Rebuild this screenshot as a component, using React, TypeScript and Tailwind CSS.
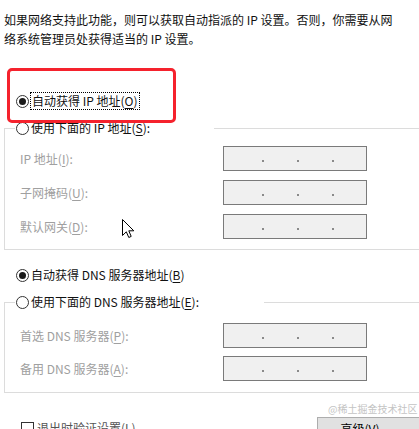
import React from "react";

function Radio({ checked }: { checked?: boolean }) {
  return (
    <span className="w-[13px] h-[13px] rounded-full border border-[#333333] bg-white flex items-center justify-center shrink-0">
      {checked && <span className="w-[7px] h-[7px] rounded-full bg-[#1a1a1a]" />}
    </span>
  );
}

function IpBox() {
  return (
    <div className="w-[144px] h-[25px] border border-[#7a7a7a] bg-[#f0f0f0] flex items-center pl-[38px] pt-[5px] gap-[33px]">
      <span className="w-[2px] h-[2px] bg-[#8a8a8a]" />
      <span className="w-[2px] h-[2px] bg-[#8a8a8a]" />
      <span className="w-[2px] h-[2px] bg-[#8a8a8a]" />
    </div>
  );
}

function Row({ label, k, rest }: { label: string; k: string; rest?: string }) {
  return (
    <div className="grid grid-cols-[218px_144px] items-center h-[25px]">
      <span className="pl-[15px] text-[#a0a0a0]">
        {label}(<u className="underline-offset-2">{k}</u>){rest ?? ":"}
      </span>
      <IpBox />
    </div>
  );
}

function Cursor() {
  return (
    <svg width="13" height="20" viewBox="0 0 13 20" className="absolute left-[122px] top-[219px]">
      <path
        d="M0.5 0.5 L0.5 16.5 L4.3 12.8 L6.8 18.5 L9.2 17.4 L6.8 11.8 L11.8 11.8 Z"
        fill="white"
        stroke="black"
        strokeWidth="1"
        strokeLinejoin="miter"
      />
    </svg>
  );
}

export default function App() {
  return (
    <div className="relative w-[419px] h-[429px] overflow-hidden bg-white text-[12px] text-[#111] font-['Noto_Sans_CJK_SC',sans-serif]">
      <p className="pt-[10px] px-[4px] leading-[19px]">
        如果网络支持此功能，则可以获取自动指派的 IP 设置。否则，你需要从网
        <br />
        络系统管理员处获得适当的 IP 设置。
      </p>

      <div className="mt-[44px] h-[18px] flex items-center pl-[16px] gap-[1px]">
        <Radio checked />
        <span className="border border-dotted border-black h-[18px] flex items-center px-[1px] leading-none">
          自动获得 IP 地址(<u className="underline-offset-2">O</u>)
        </span>
      </div>

      <div className="mt-[18px] ml-[4px] w-[420px] border border-[#dcdcdc] pb-[10px]">
        <div className="-mt-[10px] ml-[10px] w-[199px] h-[18px] bg-white flex items-center gap-[2px] pl-[1px]">
          <Radio />
          <span>
            使用下面的 IP 地址(<u className="underline-offset-2">S</u>):
          </span>
        </div>
        <div className="mt-[9px] flex flex-col gap-[9px]">
          <Row label="IP 地址" k="I" />
          <Row label="子网掩码" k="U" />
          <Row label="默认网关" k="D" />
        </div>
      </div>

      <div className="mt-[16px] h-[18px] flex items-center pl-[16px] gap-[2px]">
        <Radio checked />
        <span>
          自动获得 DNS 服务器地址(<u className="underline-offset-2">B</u>)
        </span>
      </div>

      <div className="mt-[18px] ml-[4px] w-[420px] border border-[#dcdcdc] pb-[11px]">
        <div className="-mt-[10px] ml-[10px] w-[249px] h-[18px] bg-white flex items-center gap-[2px] pl-[1px]">
          <Radio />
          <span>
            使用下面的 DNS 服务器地址(<u className="underline-offset-2">E</u>):
          </span>
        </div>
        <div className="mt-[12px] flex flex-col gap-[8px]">
          <Row label="首选 DNS 服务器" k="P" />
          <Row label="备用 DNS 服务器" k="A" />
        </div>
      </div>

      <div className="mt-[24px] flex items-start">
        <div className="ml-[21px] mt-[2px] flex items-center gap-[3px]">
          <span className="w-[13px] h-[13px] border border-[#333333] bg-white" />
          <span className="text-[#555]">
            退出时验证设置(<u className="underline-offset-2">L</u>)
          </span>
        </div>
        <button className="ml-auto -mr-[10px] w-[112px] h-[23px] bg-[#e1e1e1] border border-[#adadad] text-[12px] text-black flex items-center justify-center pr-[16px]">
          高级(<u className="underline-offset-2">V</u>)...
        </button>
      </div>

      <div className="absolute left-[7px] top-[68px] w-[169px] h-[55px] border-[3px] border-[#f5222d] rounded-[5px]" />

      <div className="absolute left-[328px] top-[402px] text-[10px] leading-[14px] text-[#c4c4c4]">
        @稀土掘金技术社区
      </div>

      <Cursor />
    </div>
  );
}
